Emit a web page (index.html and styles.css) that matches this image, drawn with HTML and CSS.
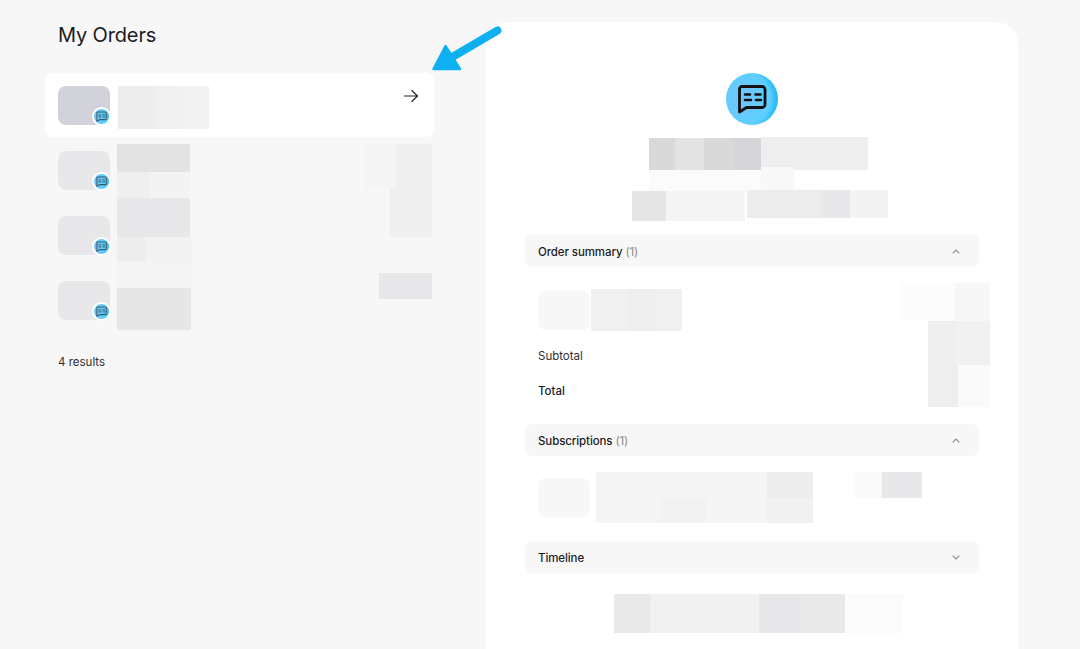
FILE: index.html
```html
<!DOCTYPE html>
<html lang="en">
<head>
	<meta charset="UTF-8">
	<title>My Orders</title>
	<link rel="stylesheet" href="styles.css">
</head>
<body>
	<svg class="defs" width="0" height="0">
		<symbol id="chat" viewBox="0 0 30 30">
			<path d="M5 2.500h20a3 3 0 0 1 3 3v15a3 3 0 0 1-3 3H9.500L2.500 28V5a2.500 2.500 0 0 1 2.500-2.500z" fill="none" stroke="currentColor" stroke-width="2.800" stroke-linejoin="round"/>
			<path d="M8 10.500h5M18.500 10.500h5M8 16h6M19 16h5" fill="none" stroke="currentColor" stroke-width="2.600" stroke-linecap="round"/>
		</symbol>
	</svg>

	<!--left list-->
	<div class="left">
		<h1 class="title">My Orders</h1>
		<ul class="orders">
			<li class="order current">
				<div class="thumb"><span class="badge"><svg><use href="#chat"/></svg></span></div>
				<div class="stack one">
					<div class="seg-row r1"><i class="c-ed"></i><i class="c-f0"></i><i class="c-f2"></i></div>
				</div>
				<svg class="go" width="16" height="14" viewBox="0 0 16 14">
					<path d="M1 7h13M8.500 1.200 14.500 7l-6 5.800" fill="none" stroke="#222" stroke-width="1.200"/>
				</svg>
			</li>
			<li class="order">
				<div class="thumb"><span class="badge"><svg><use href="#chat"/></svg></span></div>
				<div class="stack two">
					<div class="seg-row r2a"><i class="c-e3"></i></div>
					<div class="seg-row r2b"><i class="c-ef"></i><i class="c-f3"></i></div>
				</div>
				<div class="stack side two-side">
					<div class="seg-row s2a"><i class="c-f4"></i><i class="c-ef"></i></div>
					<div class="seg-row s2b"><i class="c-ef"></i></div>
				</div>
			</li>
			<li class="order">
				<div class="thumb"><span class="badge"><svg><use href="#chat"/></svg></span></div>
				<div class="stack three">
					<div class="seg-row r3a"><i class="c-e8"></i></div>
					<div class="seg-row r3b"><i class="c-ed"></i><i class="c-f2"></i></div>
				</div>
			</li>
			<li class="order">
				<div class="thumb"><span class="badge"><svg><use href="#chat"/></svg></span></div>
				<div class="stack four">
					<div class="seg-row r4a"><i class="c-f4"></i></div>
					<div class="seg-row r4b"><i class="c-e6"></i></div>
				</div>
				<div class="stack side four-side">
					<div class="seg-row s4a"><i class="c-e8"></i></div>
				</div>
			</li>
		</ul>
		<p class="results">4 results</p>
	</div>

	<!--right detail panel-->
	<div class="panel">
		<div class="hero-icon"><svg><use href="#chat"/></svg></div>

		<div class="hero">
			<div class="seg-row h1">
				<i class="c-d8 drop"></i><i class="c-e3 drop"></i><i class="c-d8 drop"></i><i class="c-d6 drop"></i><i class="c-ee"></i>
			</div>
			<div class="seg-row h2"><i class="c-fb low"></i><i class="c-f8"></i></div>
			<div class="seg-row h3">
				<i class="c-e6 drop"></i><i class="c-f5 drop"></i><i></i><i class="c-ec short"></i><i class="c-e8 short"></i><i class="c-f3 short"></i>
			</div>
		</div>

		<div class="acc-head first">
			<span>Order summary <em>(1)</em></span>
			<svg class="chev" width="8" height="5" viewBox="0 0 8 5"><path d="M.7 4.300 4 1l3.300 3.300" fill="none" stroke="#8a8a8a" stroke-width="1.100"/></svg>
		</div>
		<div class="summary">
			<div class="summary-main">
				<div class="line-item">
					<div class="thumb pale"></div>
					<div class="seg-row l1"><i class="c-f0"></i><i class="c-ee"></i><i class="c-f0"></i></div>
				</div>
				<p class="sub">Subtotal</p>
				<p class="total">Total</p>
			</div>
			<div class="amounts">
				<div class="seg-row a1"><i class="c-fc"></i><i class="c-f7"></i></div>
				<div class="seg-row a2"><i class="c-ee"></i><i class="c-f1"></i></div>
				<div class="seg-row a3"><i class="c-ee"></i><i class="c-fa"></i></div>
			</div>
		</div>

		<div class="acc-head">
			<span>Subscriptions <em>(1)</em></span>
			<svg class="chev" width="8" height="5" viewBox="0 0 8 5"><path d="M.7 4.300 4 1l3.300 3.300" fill="none" stroke="#8a8a8a" stroke-width="1.100"/></svg>
		</div>
		<div class="subs">
			<div class="thumb pale"></div>
			<div class="sub-text">
				<div class="seg-row t1"><i class="c-f5"></i><i class="c-ed"></i></div>
				<div class="seg-row t2"><i class="c-f5"></i><i class="c-f2"></i><i class="c-f5"></i><i class="c-f1"></i></div>
			</div>
			<div class="seg-row t3"><i class="c-f9"></i><i class="c-e8"></i></div>
		</div>

		<div class="acc-head">
			<span>Timeline</span>
			<svg class="chev" width="8" height="5" viewBox="0 0 8 5"><path d="M.7.700 4 4 7.300.700" fill="none" stroke="#8a8a8a" stroke-width="1.100"/></svg>
		</div>
		<div class="seg-row tl"><i class="c-e9"></i><i class="c-f1"></i><i class="c-e7"></i><i class="c-e9"></i><i class="c-fb"></i></div>
	</div>

	<!--callout arrow over the page-->
	<svg class="callout" width="90" height="60" viewBox="0 0 90 60">
		<path d="M24 35 67.500 9.500" fill="none" stroke="#0fb0f2" stroke-width="8" stroke-linecap="round"/>
		<path d="M15.500 25 3.500 48H30z" fill="#0fb0f2" stroke="#0fb0f2" stroke-width="2.400" stroke-linejoin="round"/>
	</svg>
</body>
</html>
```

FILE: styles.css
```css
*{
	margin:0;
	padding:0;
	box-sizing:border-box;
}
html,body{
	height:100%;
	overflow:hidden;
}
body{
	position:relative;
	display:flex;
	background:#f7f7f7;
	font-family:Inter,"Liberation Sans",sans-serif;
	font-size:11.5px;
	color:#1b1b1f;
}
ul li{
	list-style:none;
}
.defs{
	position:absolute;
}

/* left list */
.left{
	width:389px;
	margin-left:45px;
}
.title{
	padding:22px 0 0 13px;
	font-size:20px;
	line-height:26px;
	font-weight:400;
	letter-spacing:-.15px;
}
.orders{
	display:flex;
	flex-direction:column;
	gap:1px;
	margin-top:25px;
}
.order{
	display:flex;
	align-items:flex-start;
	height:64px;
	padding:0 2px 0 13px;
	border-radius:8px;
}
.order.current{
	background:#fff;
	padding-right:15px;
}
.thumb{
	position:relative;
	flex:none;
	width:52px;
	height:39px;
	margin-top:13px;
	background:#e8e8ea;
	border-radius:8px;
}
.current .thumb{
	background:#d2d2da;
}
.thumb.pale{
	margin-top:0;
	background:#f7f7f7;
}
.badge{
	position:absolute;
	right:-1px;
	bottom:-1px;
	display:flex;
	align-items:center;
	justify-content:center;
	width:19px;
	height:19px;
	background:linear-gradient(90deg,#6cc8fd,#56cdff 75%,#20b8f5);
	border:2px solid #fff;
	border-radius:50%;
	color:#46565f;
}
.badge svg{
	width:11px;
	height:11px;
}
.stack{
	flex:none;
	margin-left:7px;
}
.current .stack{
	margin-left:8px;
	margin-top:13px;
}
.stack.two{
	margin-top:6px;
}
.stack.three{
	margin-top:-5px;
}
.stack.four{
	margin-top:-6px;
}
.stack.side{
	margin-left:auto;
}
.two-side{
	margin-top:6px;
}
.four-side{
	margin-top:5px;
}
.go{
	margin:16px 0 0 auto;
}
.results{
	margin:22px 0 0 13px;
	line-height:16px;
	color:#2e2e33;
}

/* blurred-out blocks */
.seg-row{
	display:grid;
	flex:none;
}
.seg-row i{
	display:block;
}
.c-d6{background:#d6d6da}
.c-d8{background:#d9d9d9}
.c-e3{background:#e3e3e3}
.c-e6{background:#e6e6e6}
.c-e7{background:#e7e7e9}
.c-e8{background:#e8e8ea}
.c-e9{background:#e9e9ea}
.c-ec{background:#ececec}
.c-ed{background:#ededed}
.c-ee{background:#eeeeee}
.c-ef{background:#efefef}
.c-f0{background:#f0f0f0}
.c-f1{background:#f1f1f1}
.c-f2{background:#f2f2f2}
.c-f3{background:#f3f3f3}
.c-f4{background:#f4f4f4}
.c-f5{background:#f5f5f5}
.c-f7{background:#f7f7f7}
.c-f8{background:#f8f8f8}
.c-f9{background:#f9f9f9}
.c-fa{background:#fafafa}
.c-fb{background:#fbfbfb}
.c-fc{background:#fcfcfc}

.r1{grid-template-columns:39px 26px 26px;height:43px}
.r2a{grid-template-columns:73px;height:28px}
.r2b{grid-template-columns:33px 40px;height:26px}
.r3a{grid-template-columns:73px;height:39px}
.r3b{grid-template-columns:29px 46px;height:25px}
.r4a{grid-template-columns:75px;height:26px}
.r4b{grid-template-columns:74px;height:42px}
.s2a{grid-template-columns:32px 36px;height:44px}
.s2b{grid-template-columns:42px;height:49px;justify-content:end}
.s4a{grid-template-columns:53px;height:26px}

/* right panel */
.panel{
	width:532px;
	height:640px;
	margin:22px 0 0 52px;
	padding:51px 39px 0;
	background:#fff;
	border-radius:22px 22px 0 0;
}
.hero-icon{
	display:flex;
	align-items:center;
	justify-content:center;
	width:52px;
	height:52px;
	margin-left:201px;
	background:radial-gradient(circle at 32% 50%,#74c4fb 0,#5ccfff 62%,#33bff9 74%,#0db0f2 88%);
	border-radius:50%;
	color:#111;
}
.hero-icon svg{
	width:30px;
	height:30px;
}
.hero{
	margin-top:12px;
}
.h1{
	grid-template-columns:26px 29px 30px 27px 107px;
	height:30px;
	margin-left:124px;
}
.h1 .drop{
	height:32px;
	margin-top:1px;
}
.h2{
	grid-template-columns:112px 33px;
	align-items:end;
	height:24px;
	margin-left:124px;
}
.h2 i{
	height:24px;
}
.h2 .low{
	height:21px;
}
.h3{
	grid-template-columns:34px 79px 2px 73px 30px 38px;
	height:31px;
	margin-left:107px;
	margin-top:-1px;
}
.h3 .drop{
	height:30px;
	margin-top:1px;
}
.h3 .short{
	height:28px;
}
.acc-head{
	display:flex;
	align-items:center;
	justify-content:space-between;
	height:32px;
	padding:0 19px 0 13px;
	background:#f7f7f7;
	border-radius:8px;
	font-weight:500;
	letter-spacing:-.1px;
}
.acc-head span{
	padding-top:2px;
}
.acc-head.first{
	margin-top:14px;
}
.acc-head em{
	font-style:normal;
	font-weight:400;
	color:#8a8a8a;
}
.summary{
	display:flex;
	justify-content:space-between;
	margin:16px -11px 17px 13px;
}
.line-item{
	display:flex;
	align-items:center;
	height:42px;
	margin-top:6px;
}
.l1{
	grid-template-columns:37px 28px 26px;
	height:42px;
	margin-left:1px;
}
.sub{
	margin-top:17px;
	line-height:16px;
	color:#2e2e33;
}
.total{
	margin-top:19px;
	line-height:16px;
	font-weight:500;
}
.a1{grid-template-columns:55px 35px;height:38px}
.a2{grid-template-columns:27px 35px;height:44px;justify-content:end}
.a3{grid-template-columns:30px 32px;height:42px;justify-content:end}
.subs{
	display:flex;
	align-items:flex-start;
	height:85px;
	padding:16px 0 0 13px;
}
.subs .thumb{
	margin-top:6px;
}
.sub-text{
	margin-left:6px;
}
.t1{grid-template-columns:171px 46px;height:26px}
.t2{grid-template-columns:64px 46px 61px 46px;height:25px}
.t3{grid-template-columns:27px 40px;height:26px;margin-left:42px}
.tl{
	grid-template-columns:36px 109px 40px 46px 58px;
	height:39px;
	margin:21px 0 0 89px;
}

/* callout arrow */
.callout{
	position:absolute;
	left:430px;
	top:21px;
}
```
